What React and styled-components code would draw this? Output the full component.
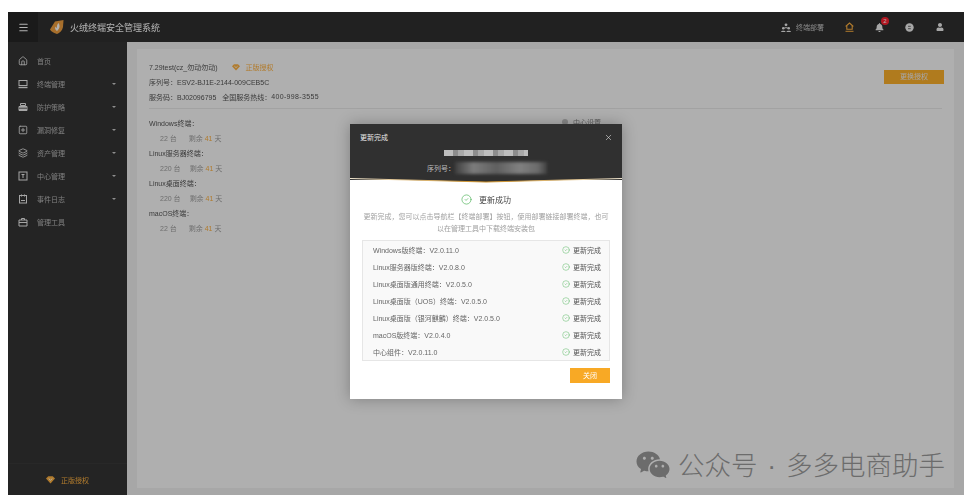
import React from "react";
import styled, { createGlobalStyle } from "styled-components";
import { Home, SquarePlus, Layers, CircleCheck, X, Menu } from "lucide-react";
import { FaBell, FaUser } from "react-icons/fa";
import { RiWechatFill } from "react-icons/ri";

const GlobalStyle = createGlobalStyle`
  html, body { margin: 0; padding: 0; background: #fff; }
  body {
    width: 976px;
    height: 504px;
    overflow: hidden;
    font-family: "Liberation Sans", "Noto Sans CJK SC", sans-serif;
  }
`;

const Frame = styled.div`
  position: relative;
  width: 956px;
  height: 483px;
  margin: 12px 0 0 8px;
  overflow: hidden;
`;

const Page = styled.div`
  display: flex;
  flex-direction: column;
  height: 100%;
  background: #f0f0f0;
  filter: blur(0.4px);
`;

const Header = styled.header`
  display: flex;
  align-items: center;
  height: 30px;
  flex: none;
  background: #303030;
`;

const MenuToggle = styled.div`
  display: flex;
  align-items: center;
  justify-content: center;
  width: 30px;
  height: 100%;
  background: #262626;
  color: #fff;
`;

const Logo = styled.svg`
  width: 16px;
  height: 16px;
  margin-left: 11px;
`;

const Title = styled.div`
  margin-left: 5px;
  font-size: 9px;
  color: #fff;
`;

const HeaderTools = styled.div`
  display: flex;
  align-items: center;
  margin-left: auto;
  height: 100%;
  padding-right: 20px;
`;

const Deploy = styled.div`
  display: flex;
  align-items: center;
  gap: 5px;
  font-size: 7px;
  color: #c4c4c4;
  margin-right: 21px;
`;

const ToolIcon = styled.div`
  position: relative;
  display: flex;
  align-items: center;
  justify-content: center;
  width: 9px;
  margin-left: ${(p) => p.$gap || 0}px;
  color: ${(p) => p.$color || "#f0f0f0"};
`;

const Badge = styled.span`
  position: absolute;
  top: -6px;
  right: -5px;
  width: 8px;
  height: 8px;
  border-radius: 50%;
  background: #ff2232;
  color: #fff;
  font-size: 6px;
  line-height: 8px;
  text-align: center;
`;

const Body = styled.div`
  display: flex;
  flex: 1;
  min-height: 0;
`;

const Sidebar = styled.aside`
  display: flex;
  flex-direction: column;
  width: 119px;
  flex: none;
  padding-top: 7px;
  box-sizing: border-box;
  background: #343434;
`;

const NavItem = styled.div`
  display: flex;
  align-items: center;
  height: 23px;
  padding-left: 10px;
  color: #eee;
  font-size: 7px;
`;

const NavLabel = styled.span`
  margin-left: 9px;
  color: #b8b8b8;
`;

const Caret = styled.span`
  margin-left: auto;
  margin-right: 11px;
  border-left: 2px solid transparent;
  border-right: 2px solid transparent;
  border-top: 2px solid #ccc;
`;

const SidebarFooter = styled.div`
  display: flex;
  align-items: center;
  justify-content: center;
  gap: 6px;
  margin-top: auto;
  height: 31px;
  border-top: 1px solid #3a3a3a;
  color: #fdb040;
  font-size: 7px;
`;

const Main = styled.main`
  flex: 1;
  display: flex;
  padding: 7px 10px;
  min-width: 0;
`;

const Card = styled.section`
  position: relative;
  flex: 1;
  padding: 10px 12px 0;
  background: #fbfbfb;
  color: #555;
`;

const InfoLine = styled.div`
  display: flex;
  align-items: center;
  height: 15px;
  font-size: 7px;
  white-space: pre;
`;

const AuthTag = styled.span`
  display: inline-flex;
  align-items: center;
  gap: 5px;
  margin-left: 15px;
  color: #fdb040;
`;

const Hotline = styled.span`
  letter-spacing: 0.35px;
`;

const Divider = styled.div`
  height: 1px;
  margin: 4px 0 6px 0;
  background: #e8e8e8;
`;

const DetailLine = styled(InfoLine)`
  padding-left: 11px;
  color: #a0a0a0;
`;

const Days = styled.span`
  margin-left: ${(p) => p.$gap}px;
`;

const Gold = styled.b`
  font-weight: 400;
  color: #fdb040;
`;

const ReplaceButton = styled.div`
  position: absolute;
  top: 21px;
  right: 10px;
  width: 60px;
  height: 14px;
  line-height: 14px;
  text-align: center;
  background: #fdb02c;
  color: #eee;
  font-size: 7px;
`;

const CenterNote = styled.div`
  position: absolute;
  top: 68px;
  left: 425px;
  display: flex;
  align-items: center;
  gap: 5px;
  font-size: 7px;
  color: #888;
  &::before {
    content: "";
    width: 6px;
    height: 6px;
    border-radius: 50%;
    background: #c4c4c4;
  }
`;

const Overlay = styled.div`
  position: absolute;
  inset: 0;
  display: flex;
  justify-content: center;
  align-items: flex-start;
  padding-top: 112px;
  background: rgba(0, 0, 0, 0.3);
`;

const Dialog = styled.div`
  display: flex;
  flex-direction: column;
  width: 272px;
  height: 275px;
  background: #fff;
  box-shadow: 0 0 14px rgba(0, 0, 0, 0.28);
  filter: blur(0.35px);
`;

const DialogHead = styled.div`
  display: flex;
  flex-direction: column;
  flex: none;
  height: 56px;
  background: #303030;
  color: #e8e8e8;
`;

const DialogTop = styled.div`
  display: flex;
  align-items: center;
  justify-content: space-between;
  height: 26px;
  padding: 0 9px 0 10px;
  font-size: 7px;
`;

const Masked = styled.div`
  align-self: center;
  width: 84px;
  height: 6px;
  background: repeating-linear-gradient(90deg, #bdbdbd 0 9px, #8c8c8c 9px 14px, #a8a8a8 14px 20px);
  filter: blur(0.6px);
`;

const SerialRow = styled.div`
  display: flex;
  align-items: center;
  margin: 6px 0 0 77px;
  height: 12px;
  font-size: 7px;
  color: #bbb;
`;

const SerialMask = styled.div`
  width: 92px;
  height: 12px;
  background: linear-gradient(90deg, #3f3f3f, #7c7c7c 20%, #5f5f5f 45%, #808080 70%, #6b6b6b 90%, #414141);
  filter: blur(1.5px);
`;

const Swoosh = styled.svg`
  display: block;
  flex: none;
  width: 272px;
  height: 6px;
  margin-top: -3px;
`;

const Success = styled.div`
  display: flex;
  align-items: center;
  justify-content: center;
  gap: 7px;
  margin-top: 9px;
  height: 14px;
  font-size: 8px;
  color: #444;
`;

const Desc = styled.p`
  margin: 5px 12px 0;
  font-size: 7px;
  line-height: 11.5px;
  text-align: center;
  color: #a0a0a0;
`;

const VersionTable = styled.div`
  margin: 6px 12px 0;
  border: 1px solid #e6e6e6;
  background: #f9f9f9;
`;

const VersionRow = styled.div`
  display: flex;
  align-items: center;
  justify-content: space-between;
  height: 17px;
  padding: 0 8px 0 10px;
  font-size: 7px;
  color: #666;
`;

const RowStatus = styled.span`
  display: inline-flex;
  align-items: center;
  gap: 3px;
  color: #555;
  font-size: 7px;
`;

const DialogFoot = styled.div`
  display: flex;
  justify-content: flex-end;
  padding: 7px 12px 0;
`;

const CloseButton = styled.div`
  width: 40px;
  height: 15px;
  line-height: 15px;
  text-align: center;
  background: #f8a925;
  color: #fff;
  font-size: 7px;
`;

const Watermark = styled.div`
  position: absolute;
  left: 627px;
  top: 435px;
  display: flex;
  align-items: center;
  gap: 7px;
  font-family: "Noto Sans CJK SC", sans-serif;
  font-size: 26.5px;
  font-weight: 300;
  line-height: 34px;
  color: #6c6c6c;
  white-space: pre;
`;

const Dot = styled.span`
  margin: 0 2.5px;
  font-family: "Liberation Sans", sans-serif;
`;

const Medal = ({ size = 9 }) => (
  <svg width={size} height={size} viewBox="0 0 10 10">
    <path d="M2.5 1.500h5L10 4 5 9.500 0 4z" fill="#fdb040" />
    <path d="M3 4l2 1.800L7 4" fill="none" stroke="#fff" strokeWidth="1" />
  </svg>
);

const Glyph = ({ children, size = 10 }) => (
  <svg width={size} height={size} viewBox="0 0 10 10" fill="none" stroke="currentColor" strokeWidth="1">
    {children}
  </svg>
);

const MonitorIcon = () => (
  <Glyph>
    <rect x="1" y="1.500" width="8" height="5" />
    <path d="M.5 8.500h9" strokeWidth="1.400" />
  </Glyph>
);

const ShieldBoxIcon = () => (
  <Glyph>
    <path d="M2.500 1.500h5v2h-5z" />
    <path d="M1 4.500h8v4H1z" fill="currentColor" />
    <path d="M1 6.200h8" stroke="#343434" strokeWidth=".8" />
  </Glyph>
);

const CenterIcon = () => (
  <Glyph>
    <rect x="1" y="1" width="8" height="8" />
    <path d="M3.500 3.500h3M5 3.500v3.500" />
  </Glyph>
);

const LogIcon = () => (
  <Glyph>
    <rect x="1.500" y="1.500" width="7" height="7.500" />
    <path d="M3.500 .5v2M6.500 .5v2M3 6.500h4" />
  </Glyph>
);

const ToolboxIcon = () => (
  <Glyph>
    <path d="M3.500 3V1.500h3V3" />
    <path d="M1 3h8v6H1z" />
    <path d="M1 5.500h8" />
  </Glyph>
);

const DeployIcon = () => (
  <svg width="10" height="9" viewBox="0 0 10 9" fill="#eee">
    <circle cx="5" cy="1.800" r="1.400" />
    <path d="M3 5c0-1 4-1 4 0v.3H3z" />
    <circle cx="2.300" cy="5.300" r="1.300" />
    <path d="M0 9c0-1.600 4.600-1.600 4.600 0z" />
    <circle cx="7.700" cy="5.300" r="1.300" />
    <path d="M5.400 9c0-1.600 4.600-1.600 4.600 0z" />
  </svg>
);

const RoofIcon = () => (
  <svg width="9" height="10" viewBox="0 0 9 10" fill="none" stroke="#fdb040" strokeWidth="1.100">
    <path d="M.7 4.500 4.500 1l3.800 3.500" />
    <path d="M1.800 4v3.300h5.400V4" />
    <path d="M.5 9.300h8" strokeWidth="1" />
  </svg>
);

const ClockBadgeIcon = () => (
  <svg width="9" height="9" viewBox="0 0 9 9">
    <circle cx="4.500" cy="4.500" r="4.200" fill="#f0f0f0" />
    <path d="M3 3.300h2.800M3 5.700h2.800" stroke="#303030" strokeWidth=".7" />
  </svg>
);

const navItems = [
  { icon: <Home size={10} strokeWidth={2} />, label: "首页" },
  { icon: <MonitorIcon />, label: "终端管理", more: true },
  { icon: <ShieldBoxIcon />, label: "防护策略", more: true },
  { icon: <SquarePlus size={10} strokeWidth={2} />, label: "漏洞修复", more: true },
  { icon: <Layers size={10} strokeWidth={2} />, label: "资产管理", more: true },
  { icon: <CenterIcon />, label: "中心管理", more: true },
  { icon: <LogIcon />, label: "事件日志", more: true },
  { icon: <ToolboxIcon />, label: "管理工具" },
];

const licences = [
  { name: "Windows终端：", count: "22 台", gap: 12 },
  { name: "Linux服务器终端：", count: "220 台", gap: 9 },
  { name: "Linux桌面终端：", count: "220 台", gap: 9 },
  { name: "macOS终端：", count: "22 台", gap: 12 },
];

const versions = [
  "Windows版终端：V2.0.11.0",
  "Linux服务器版终端：V2.0.8.0",
  "Linux桌面版通用终端：V2.0.5.0",
  "Linux桌面版（UOS）终端：V2.0.5.0",
  "Linux桌面版（银河麒麟）终端：V2.0.5.0",
  "macOS版终端：V2.0.4.0",
  "中心组件：V2.0.11.0",
];

export default function App() {
  return (
    <>
      <GlobalStyle />
      <Frame>
        <Page>
          <Header>
            <MenuToggle>
              <Menu size={11} strokeWidth={2.5} />
            </MenuToggle>
            <Logo viewBox="0 0 16 16">
              <path d="M6 2.500 14.500 1 14 8c-.6 3.600-3.400 6-6 7-2.600-.5-6-2.500-7-4.500z" fill="#f0a040" />
              <path d="M9.500 4c1.600 2.600 1.600 5.500-1.500 8-1.800-1-2.500-2.800-1.400-4.500.3 1 .8 1.300 1.300 1.200C7.700 7 8.300 5.300 9.500 4z" fill="#fff" />
            </Logo>
            <Title>火绒终端安全管理系统</Title>
            <HeaderTools>
              <Deploy>
                <DeployIcon />
                终端部署
              </Deploy>
              <ToolIcon>
                <RoofIcon />
              </ToolIcon>
              <ToolIcon $gap={21}>
                <FaBell size={9} />
                <Badge>2</Badge>
              </ToolIcon>
              <ToolIcon $gap={21}>
                <ClockBadgeIcon />
              </ToolIcon>
              <ToolIcon $gap={21}>
                <FaUser size={8} />
              </ToolIcon>
            </HeaderTools>
          </Header>
          <Body>
            <Sidebar>
              {navItems.map((item) => (
                <NavItem key={item.label}>
                  {item.icon}
                  <NavLabel>{item.label}</NavLabel>
                  {item.more && <Caret />}
                </NavItem>
              ))}
              <SidebarFooter>
                <Medal />
                正版授权
              </SidebarFooter>
            </Sidebar>
            <Main>
              <Card>
                <InfoLine>
                  7.29test(cz_勿动勿动)
                  <AuthTag>
                    <Medal size={8} />
                    正版授权
                  </AuthTag>
                </InfoLine>
                <InfoLine>序列号：ESV2-BJ1E-2144-009CEB5C</InfoLine>
                <InfoLine>
                  服务码：BJ02096795   全国服务热线：<Hotline>400-998-3555</Hotline>
                </InfoLine>
                <Divider />
                {licences.map((l) => (
                  <React.Fragment key={l.name}>
                    <InfoLine>{l.name}</InfoLine>
                    <DetailLine>
                      {l.count}
                      <Days $gap={l.gap}>
                        剩余 <Gold>41</Gold> 天
                      </Days>
                    </DetailLine>
                  </React.Fragment>
                ))}
                <ReplaceButton>更换授权</ReplaceButton>
                <CenterNote>中心设置</CenterNote>
              </Card>
            </Main>
          </Body>
        </Page>
        <Overlay>
          <Dialog>
            <DialogHead>
              <DialogTop>
                更新完成
                <X size={9} strokeWidth={1.5} />
              </DialogTop>
              <Masked />
              <SerialRow>
                序列号：
                <SerialMask />
              </SerialRow>
            </DialogHead>
            <Swoosh viewBox="0 0 272 6" preserveAspectRatio="none">
              <defs>
                <linearGradient id="gold" x1="0" x2="1" y1="0" y2="0">
                  <stop offset="0" stopColor="#f3e9d3" />
                  <stop offset="0.5" stopColor="#c98a1f" />
                  <stop offset="1" stopColor="#f3e9d3" />
                </linearGradient>
              </defs>
              <path d="M0 0H272V1.500L136 5 0 1.500z" fill="#303030" />
              <path d="M0 1.500 136 5 272 1.500" fill="none" stroke="url(#gold)" strokeWidth="1" />
            </Swoosh>
            <Success>
              <CircleCheck size={11} strokeWidth={1.5} color="#52b45c" />
              更新成功
            </Success>
            <Desc>
              更新完成，您可以点击导航栏【终端部署】按钮，使用部署链接部署终端，也可以在管理工具中下载终端安装包
            </Desc>
            <VersionTable>
              {versions.map((v) => (
                <VersionRow key={v}>
                  {v}
                  <RowStatus>
                    <CircleCheck size={8} strokeWidth={1.5} color="#5cb866" />
                    更新完成
                  </RowStatus>
                </VersionRow>
              ))}
            </VersionTable>
            <DialogFoot>
              <CloseButton>关闭</CloseButton>
            </DialogFoot>
          </Dialog>
        </Overlay>
        <Watermark>
          <RiWechatFill size={36} color="#6c6c6c" />
          <span>
            公众号<Dot> · </Dot>多多电商助手
          </span>
        </Watermark>
      </Frame>
    </>
  );
}
